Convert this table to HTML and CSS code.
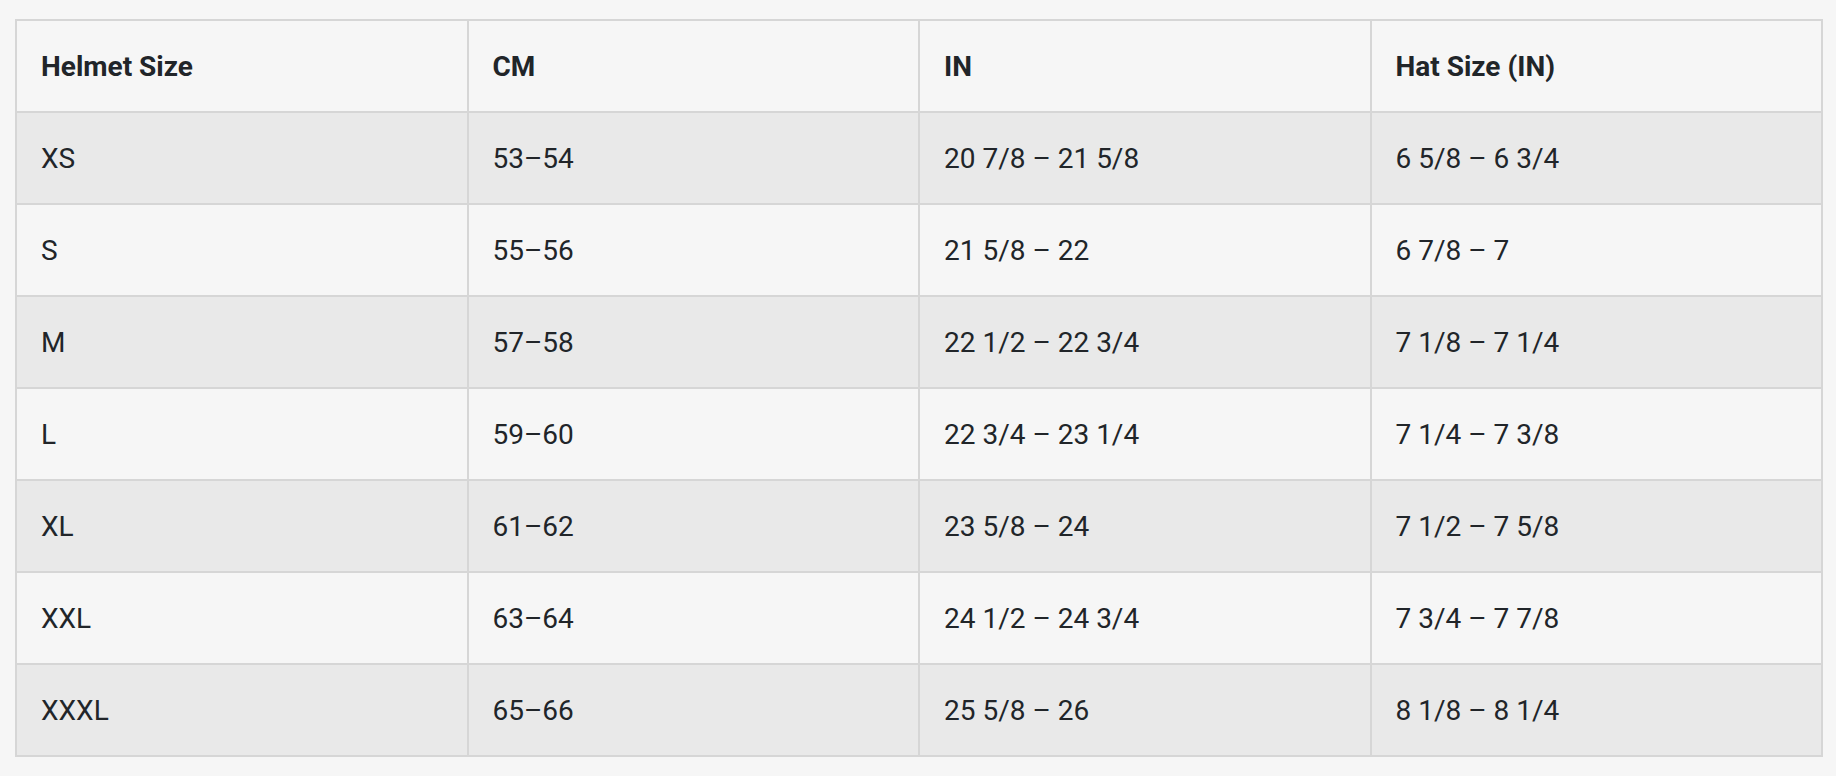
FILE: index.html
```html
<!DOCTYPE html>
<html lang="en">
<head>
<meta charset="utf-8">
<title>Helmet Size Chart</title>
<link rel="stylesheet" href="styles.css">
</head>
<body>
<div class="wrap">
<table class="size-table">
  <thead>
    <tr>
      <th>Helmet Size</th>
      <th>CM</th>
      <th>IN</th>
      <th>Hat Size (IN)</th>
    </tr>
  </thead>
  <tbody>
    <tr><td>XS</td><td>53–54</td><td>20 7/8 – 21 5/8</td><td>6 5/8 – 6 3/4</td></tr>
    <tr><td>S</td><td>55–56</td><td>21 5/8 – 22</td><td>6 7/8 – 7</td></tr>
    <tr><td>M</td><td>57–58</td><td>22 1/2 – 22 3/4</td><td>7 1/8 – 7 1/4</td></tr>
    <tr><td>L</td><td>59–60</td><td>22 3/4 – 23 1/4</td><td>7 1/4 – 7 3/8</td></tr>
    <tr><td>XL</td><td>61–62</td><td>23 5/8 – 24</td><td>7 1/2 – 7 5/8</td></tr>
    <tr><td>XXL</td><td>63–64</td><td>24 1/2 – 24 3/4</td><td>7 3/4 – 7 7/8</td></tr>
    <tr><td>XXXL</td><td>65–66</td><td>25 5/8 – 26</td><td>8 1/8 – 8 1/4</td></tr>
  </tbody>
</table>
</div>
</body>
</html>
```

FILE: styles.css
```css
html, body {
  margin: 0;
  padding: 0;
  background: #f6f6f6;
}

.wrap {
  padding: 19px 13px 0 15px;
}

.size-table {
  width: 1808px;
  table-layout: fixed;
  border-collapse: collapse;
  border: 2px solid #d6d6d6;
  font-family: Roboto, "Liberation Sans", Arial, sans-serif;
  font-size: 28px;
  color: #212529;
}

.size-table th,
.size-table td {
  width: 25%;
  border: 2px solid #d6d6d6;
  padding: 29px 24px 27px;
  line-height: 34px;
  text-align: left;
  vertical-align: middle;
}

.size-table th {
  font-weight: 700;
  background: #f6f6f6;
}

.size-table td {
  font-weight: 400;
}

.size-table tbody tr:nth-child(odd) td {
  background: #e9e9e9;
}

.size-table tbody tr:nth-child(even) td {
  background: #f6f6f6;
}
```
